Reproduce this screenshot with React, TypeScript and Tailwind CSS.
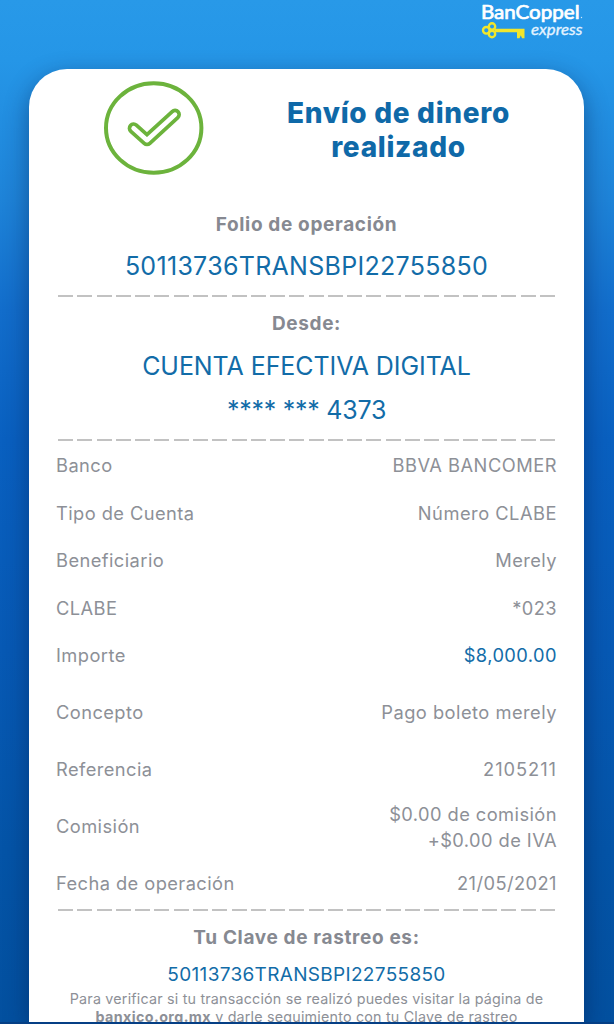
import type { ReactNode } from 'react';

interface Detail {
  label: string;
  value: ReactNode;
  rowClass: string;
  valueClass: string;
}

const GRAY = 'tracking-[0.43px] text-[#8d9097]';

const details: Detail[] = [
  { label: 'Banco', value: 'BBVA BANCOMER', rowClass: 'h-[47.5px]', valueClass: 'tracking-[0.5px] text-[#8d9097]' },
  { label: 'Tipo de Cuenta', value: 'Número CLABE', rowClass: 'h-[47.5px]', valueClass: 'tracking-[0.5px] text-[#8d9097]' },
  { label: 'Beneficiario', value: 'Merely', rowClass: 'h-[47.5px]', valueClass: GRAY },
  { label: 'CLABE', value: '*023', rowClass: 'h-[47.5px]', valueClass: GRAY },
  {
    label: 'Importe',
    value: '$8,000.00',
    rowClass: 'mb-[4.5px] h-[47.5px]',
    valueClass: 'tracking-[0.43px] text-[#126ca8]',
  },
  { label: 'Concepto', value: 'Pago boleto merely', rowClass: 'h-[57px]', valueClass: 'tracking-[0.48px] text-[#8d9097]' },
  { label: 'Referencia', value: '2105211', rowClass: 'h-[57px]', valueClass: 'tracking-[0.95px] text-[#8d9097]' },
  {
    label: 'Comisión',
    value: (
      <>
        $0.00 de comisión
        <br />
        +$0.00 de IVA
      </>
    ),
    rowClass: 'h-[57px]',
    valueClass: 'pt-px tracking-[0.43px] text-[#8d9097]',
  },
  { label: 'Fecha de operación', value: '21/05/2021', rowClass: 'h-[57px]', valueClass: GRAY },
];

export default function App() {
  return (
    <div className="h-[1024px] w-[614px] overflow-hidden bg-[linear-gradient(180deg,#2899e8_0px,#2596e7_60px,#1e83d8_200px,#126dcb_310px,#0960c0_440px,#0759b4_650px,#0454a7_850px,#03509f_1024px)] font-['Inter','Liberation_Sans',sans-serif]">
      <header className="flex h-[69px] justify-end pr-[30px]">
        <Logo />
      </header>

      <main className="ml-[29px] h-[953px] w-[555px] overflow-hidden rounded-t-[38px] bg-white text-center shadow-[0_8px_24px_rgba(0,25,70,0.45)]">
        <div className="flex h-[121px] items-start">
          <SuccessIcon />
          <h1 className="ml-[60px] mt-[28px] w-[269px] text-[28px] font-extrabold leading-[33.5px] tracking-[0.7px] text-[#0f69a8]">
            Envío de dinero realizado
          </h1>
        </div>

        <section className="h-[105px] pt-[21px]">
          <SectionTitle>Folio de operación</SectionTitle>
          <p className="mt-[11px] text-[25px] leading-[32px] tracking-[0.3px] text-[#126ca8]">
            50113736TRANSBPI22755850
          </p>
        </section>
        <Divider />

        <section className="h-[142px] pt-[13px]">
          <SectionTitle>Desde:</SectionTitle>
          <p className="mt-[12px] text-[25px] leading-[32px] tracking-[-0.07px] text-[#126ca8]">
            CUENTA EFECTIVA DIGITAL
          </p>
          <p className="mt-[12px] text-[25px] leading-[32px] tracking-[-0.25px] text-[#126ca8]">
            **** *** 4373
          </p>
        </section>
        <Divider />

        <dl className="h-[468px] px-[27px] pt-[0.5px]">
          {details.map((detail) => (
            <div
              key={detail.label}
              className={`flex items-center justify-between text-[18.3px] leading-[26px] ${detail.rowClass}`}
            >
              <dt className={GRAY}>{detail.label}</dt>
              <dd className={`text-right ${detail.valueClass}`}>{detail.value}</dd>
            </div>
          ))}
        </dl>
        <Divider />

        <section className="pt-[13px]">
          <SectionTitle>Tu Clave de rastreo es:</SectionTitle>
          <p className="mt-[11px] text-[19px] leading-[24px] tracking-[0.32px] text-[#126ca8]">
            50113736TRANSBPI22755850
          </p>
          <p className="mt-[3px] whitespace-nowrap text-[14.3px] leading-[18px] tracking-[0.2px] text-[#8d9097]">
            Para verificar si tu transacción se realizó puedes visitar la página de
            <br />
            <strong className="font-bold tracking-[0.4px]">banxico.org.mx</strong> y darle seguimiento con tu Clave de rastreo
          </p>
        </section>
      </main>
      <div className="h-[2px] bg-[#053f85]" />
    </div>
  );
}

function SectionTitle({ children }: { children: ReactNode }) {
  return (
    <h2 className="text-[19px] font-bold leading-[28px] tracking-[0.65px] text-[#868991]">{children}</h2>
  );
}

function Divider() {
  return (
    <div className="mx-auto h-[2px] w-[497px] bg-[repeating-linear-gradient(90deg,#c2c2c2_0px,#c2c2c2_15px,transparent_15px,transparent_19.28px)]" />
  );
}

function SuccessIcon() {
  return (
    <svg viewBox="0 0 100 94" className="ml-[75px] mt-[12px] h-[94px] w-[100px] shrink-0" fill="none">
      <ellipse cx="49.7" cy="47" rx="47.7" ry="44.7" stroke="#6cb33c" strokeWidth="4" />
      <path
        d="M29.6 47.2 L43 59.2 L71 33.6"
        stroke="#6cb33c"
        strokeWidth="12"
        strokeLinecap="round"
        strokeLinejoin="round"
      />
      <path
        d="M29.6 47.2 L43 59.2 L71 33.6"
        stroke="#fff"
        strokeWidth="4.6"
        strokeLinecap="round"
        strokeLinejoin="round"
      />
    </svg>
  );
}

function Logo() {
  return (
    <svg viewBox="0 0 104 42" className="h-[42px] w-[104px]" role="img" aria-label="BanCoppel express">
      <text
        x="1"
        y="18.5"
        fill="#fff"
        stroke="#fff"
        strokeWidth="0.7"
        strokeLinejoin="round"
        fontFamily="Lato, sans-serif"
        fontSize="18.7"
        textLength="98.5"
        lengthAdjust="spacingAndGlyphs"
      >
        BanCoppel
      </text>
      <circle cx="101.5" cy="17.5" r="0.7" fill="#cfe8fb" />
      <g fill="none" stroke="#f1e62c" strokeWidth="2.4">
        <circle cx="6.3" cy="30.3" r="3.3" />
        <circle cx="12" cy="26.5" r="3.2" />
        <circle cx="12" cy="34" r="3.2" />
      </g>
      <path d="M14.5 28.7 H44.5 V38.2 H42 L40.8 35.3 L39.5 38.2 H37 V32.2 H14.5 Z" fill="#f1e62c" />
      <text
        x="51"
        y="35.4"
        fill="#e6f4ff"
        stroke="#e6f4ff"
        strokeWidth="0.3"
        fontFamily="Lato, sans-serif"
        fontSize="15"
        fontStyle="italic"
        textLength="51.5"
        lengthAdjust="spacingAndGlyphs"
      >
        express
      </text>
    </svg>
  );
}
